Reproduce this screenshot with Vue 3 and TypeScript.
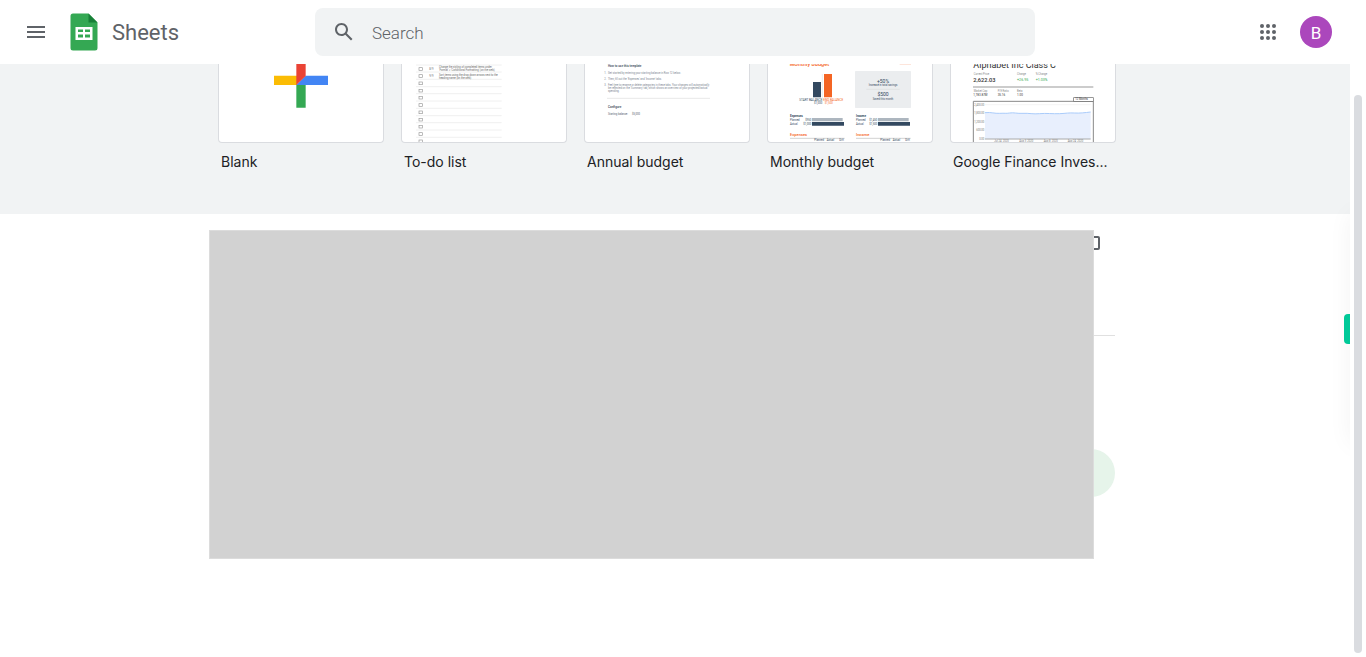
<script setup lang="ts">
import { ref } from 'vue'

const query = ref('')
const dots = [0, 6, 12]
const todoRows = [8, 29, 51, 73, 94, 116, 138, 160, 181, 203, 225]
const prices = [
  { y: 126, label: '2,400.00' },
  { y: 151, label: '1,800.00' },
  { y: 176, label: '1,200.00' },
  { y: 202, label: '600.00' },
  { y: 228, label: '0.00' },
]
const dates = [
  { x: 130, label: 'Jul 24, 2020' },
  { x: 205, label: 'Aug 3, 2020' },
  { x: 278, label: 'Aug 8, 2020' },
  { x: 350, label: 'Aug 24, 2020' },
]
const budgets = [
  { x: 66, title: 'Expenses', planned: '$950', actual: '$1,000' },
  { x: 264, title: 'Income', planned: '$1,450', actual: '$1,500' },
]
</script>

<template>
  <div class="page">
    <header class="topbar">
      <div class="brand">
        <button class="icon-button" type="button" aria-label="Main menu">
          <svg width="24" height="24" viewBox="0 0 24 24"><path fill="#5f6368" d="M3 18h18v-2H3zM3 13h18v-2H3zM3 6v2h18V6z" /></svg>
        </button>
        <a class="home" href="#">
          <svg width="28" height="38" viewBox="0 0 28 38">
            <path fill="#34a853" d="M3 .5h15.500l9 9V35a2.500 2.500 0 0 1-2.500 2.500H3A2.500 2.500 0 0 1 .5 35V3A2.500 2.500 0 0 1 3 .5z" />
            <path fill="#188038" d="M18.500.5l9 9h-9z" />
            <path fill="#fff" fill-rule="evenodd" d="M5.500 14h17v13h-17zM8 16.500v2.500h5v-2.500zM15 16.500v2.500h5v-2.500zM8 21.500v3h5v-3zM15 21.500v3h5v-3z" />
          </svg>
          <span>Sheets</span>
        </a>
      </div>
      <form class="search" role="search" @submit.prevent>
        <button class="icon-button" type="submit" aria-label="Search">
          <svg width="24" height="24" viewBox="0 0 24 24"><path fill="#5f6368" d="M20.490 19l-5.730-5.730C15.530 12.200 16 10.910 16 9.500 16 5.910 13.090 3 9.500 3S3 5.910 3 9.500 5.910 16 9.500 16c1.410 0 2.700-.470 3.770-1.240L19 20.490 20.490 19zM5 9.500C5 7.010 7.010 5 9.500 5S14 7.010 14 9.500 11.990 14 9.500 14 5 11.990 5 9.500z" /></svg>
        </button>
        <input v-model="query" type="text" placeholder="Search" aria-label="Search" />
      </form>
      <div class="account">
        <button class="icon-button" type="button" aria-label="Google apps">
          <svg width="16" height="16" viewBox="0 0 16 16" fill="#5f6368">
            <template v-for="y in dots" :key="y">
              <circle v-for="x in dots" :key="x" :cx="x + 2" :cy="y + 2" r="2" />
            </template>
          </svg>
        </button>
        <button class="avatar" type="button" aria-label="Account B">B</button>
      </div>
    </header>

    <div class="viewport">
      <main class="content">
        <section class="gallery">
          <div class="cards">
            <a class="card" href="#">
              <svg class="thumb" viewBox="0 0 492 234">
                <path fill="#fbbc04" d="M165 35h69v28h-69z" />
                <path fill="#34a853" d="M232 62h28v69h-28z" />
                <path fill="#4285f4" d="M260 35h67v28h-95z" />
                <path fill="#ea4335" d="M232-20h28v56l-28 27z" />
              </svg>
              <span class="label">Blank</span>
            </a>

            <a class="card" href="#">
              <svg class="thumb" viewBox="0 0 492 234" fill="#666">
                <g v-for="y in todoRows" :key="y">
                  <rect x="51" :y="y + 3" width="10" height="8" fill="none" stroke="#999" stroke-width="2" />
                  <path d="M42 0h257" stroke="#e8e8e8" stroke-width="2" :transform="`translate(0 ${y - 5})`" />
                </g>
                <g class="tiny">
                  <text x="82" y="18">8/9</text>
                  <text x="82" y="40">9/9</text>
                  <text x="111" y="13">Change the styling of completed items under</text>
                  <text x="111" y="22">'Format' &gt; 'Conditional Formatting' (on the web)</text>
                  <text x="111" y="35">Sort items using the drop down arrows next to the</text>
                  <text x="111" y="44">heading name (on the web)</text>
                </g>
              </svg>
              <span class="label">To-do list</span>
            </a>

            <a class="card" href="#">
              <svg class="thumb" viewBox="0 0 492 234" fill="#7d8692">
                <text class="small strong" x="69" y="10" fill="#56616e">How to use this template</text>
                <g class="tiny">
                  <text x="58" y="29">1.</text>
                  <text x="69" y="29">Get started by entering your starting balance in Row 12 below.</text>
                  <text x="58" y="47">2.</text>
                  <text x="69" y="47">Then, fill out the 'Expenses' and 'Income' tabs.</text>
                  <text x="58" y="66">3.</text>
                  <text x="69" y="66">Feel free to rename or delete categories in these tabs. Your changes will automatically</text>
                  <text x="69" y="76">be reflected on the 'Summary' tab, which shows an overview of your projected/actual</text>
                  <text x="69" y="85">spending.</text>
                </g>
                <path d="M66 103h309" stroke="#ddd" stroke-width="2" />
                <text class="small strong" x="69" y="133" fill="#56616e">Configure</text>
                <text class="tiny" x="69" y="153" fill="#56616e">Starting balance:</text>
                <text class="tiny" x="141" y="153" fill="#56616e">$5,000</text>
              </svg>
              <span class="label">Annual budget</span>
            </a>

            <a class="card" href="#">
              <svg class="thumb" viewBox="0 0 492 234" fill="#334960">
                <text class="title" x="65" y="6" fill="#f46524">Monthly budget</text>
                <path d="M395 1h34" stroke="#fbd0bd" stroke-width="2" />
                <path d="M135 54h24v46h-24z" />
                <path fill="#f46524" d="M168 30h24v70h-24z" />
                <path d="M163 30v90" stroke="#ccc" />
                <text class="small" x="94" y="110">START BALANCE</text>
                <text class="small" x="166" y="110" fill="#f46524">END BALANCE</text>
                <text class="tiny" x="138" y="120">$1,000</text>
                <text class="tiny" x="170" y="120" fill="#f46524">$1,500</text>
                <rect x="261" y="21" width="168" height="111" rx="2" fill="#ebedef" />
                <path d="M295 76h100" stroke="#ccc" />
                <g text-anchor="middle">
                  <text class="value" x="345" y="56">+50%</text>
                  <text class="tiny" x="345" y="67">Increase in total savings</text>
                  <text class="value" x="345" y="97">$500</text>
                  <text class="tiny" x="345" y="107">Saved this month</text>
                </g>
                <g v-for="b in budgets" :key="b.title" :transform="`translate(${b.x} 0)`">
                  <text class="small strong" x="0" y="158">{{ b.title }}</text>
                  <text class="tiny" x="0" y="170">Planned</text>
                  <text class="tiny" x="64" y="170" text-anchor="end">{{ b.planned }}</text>
                  <text class="tiny" x="0" y="183">Actual</text>
                  <text class="tiny" x="64" y="183" text-anchor="end">{{ b.actual }}</text>
                  <path fill="#adb6bf" d="M66 162h92v10H66z" />
                  <path d="M66 174h96v11H66z" />
                  <text class="heading" x="0" y="215" fill="#f46524">{{ b.title }}</text>
                  <path d="M0 223h164" stroke="#bbb" stroke-width="2" />
                  <text class="tiny" x="73" y="232">Planned</text>
                  <text class="tiny" x="110" y="232">Actual</text>
                  <text class="tiny" x="148" y="232">Diff.</text>
                </g>
              </svg>
              <span class="label">Monthly budget</span>
            </a>

            <a class="card" href="#">
              <svg class="thumb" viewBox="0 0 492 234" fill="#333">
                <text class="name" x="67" y="11">Alphabet Inc Class C</text>
                <g class="tiny" fill="#888">
                  <text x="68" y="34">Current Price</text>
                  <text x="198" y="34">Change</text>
                  <text x="254" y="34">% Change</text>
                  <text x="68" y="84">Market Cap</text>
                  <text x="140" y="84">P/E Ratio</text>
                  <text x="198" y="84">Beta</text>
                </g>
                <text class="price" x="67" y="54">2,622.03</text>
                <g class="amount" fill="#34a853">
                  <text x="198" y="52">+26.95</text>
                  <text x="254" y="52">+1.03%</text>
                </g>
                <path d="M66 69h361" stroke="#bbb" stroke-width="4" />
                <g class="small">
                  <text x="67" y="96">1,783.87M</text>
                  <text x="140" y="96">35.16</text>
                  <text x="198" y="96">1.00</text>
                </g>
                <path d="M102 146c20-2 28 3 44 2s18 1 30-1 22 2 40 1 30 3 50 1 40 1 60 0 28-3 44-2 32-1 49-3v81H102z" fill="#e8effd" />
                <path d="M102 146c20-2 28 3 44 2s18 1 30-1 22 2 40 1 30 3 50 1 40 1 60 0 28-3 44-2 32-1 49-3" fill="none" stroke="#a9cbfa" stroke-width="3" />
                <path d="M102 122h317" stroke="#eee" stroke-width="2" />
                <path d="M102 225h317" stroke="#aaa" stroke-width="3" />
                <path d="M67 240V112h360v128" fill="none" stroke="#888" stroke-width="3" />
                <rect x="368" y="101" width="59" height="11" fill="#fff" stroke="#666" stroke-width="2" />
                <text class="tiny" x="373" y="109">12 Months</text>
                <g class="tiny" fill="#777">
                  <text v-for="p in prices" :key="p.y" x="100" :y="p.y" text-anchor="end">{{ p.label }}</text>
                  <text v-for="d in dates" :key="d.x" :x="d.x" y="234">{{ d.label }}</text>
                </g>
              </svg>
              <span class="label">Google Finance Inves...</span>
            </a>
          </div>
        </section>

        <section class="files">
          <div class="listing">
            <div class="toolbar">
              <button class="icon-button" type="button" aria-label="Open file picker">
                <svg width="20" height="14" viewBox="0 0 20 14"><rect x="1" y="1" width="18" height="12" rx="1" fill="none" stroke="#5f6368" stroke-width="2" /></svg>
              </button>
            </div>
            <hr />
            <button class="create" type="button" aria-label="Create"></button>
            <div class="cover"></div>
          </div>
        </section>

        <div class="side-panel"></div>
        <div class="side-tab"></div>
      </main>
      <div class="scroll-track"><div class="scroll-thumb"></div></div>
    </div>
  </div>
</template>

<style>
body {
  margin: 0;
  background: #fff;
}
</style>

<style scoped>
.page {
  display: flex;
  flex-direction: column;
  min-height: 100vh;
  font-family: Inter, Roboto, sans-serif;
  color: #202124;
}

button {
  padding: 0;
  border: 0;
  background: none;
  cursor: pointer;
}

a {
  color: inherit;
  text-decoration: none;
}

.topbar {
  display: grid;
  grid-template-columns: 315px minmax(0, 720px) minmax(120px, 1fr);
  align-items: center;
  height: 64px;
}

.brand {
  display: flex;
  align-items: center;
  padding-left: 12px;
}

.icon-button {
  display: flex;
  align-items: center;
  justify-content: center;
  flex: none;
  width: 48px;
  height: 48px;
}

.home {
  display: flex;
  align-items: center;
  gap: 14px;
  margin-left: 10px;
  font: 22px/28px Roboto, sans-serif;
  color: #5f6368;
}

.home span {
  padding-top: 2px;
}

.search {
  display: flex;
  align-items: center;
  height: 48px;
  padding-left: 5px;
  border-radius: 8px;
  background: #f1f3f4;
}

.search input {
  flex: 1;
  min-width: 0;
  height: 24px;
  margin-left: 3px;
  padding: 1px 1px 0;
  border: 0;
  outline: 0;
  background: none;
  font: 300 17px/24px Roboto, sans-serif;
  color: #202124;
}

.search input::placeholder {
  color: #5f6368;
  opacity: 1;
}

.account {
  display: flex;
  align-items: center;
  justify-content: flex-end;
  gap: 8px;
  padding-right: 34px;
}

.avatar {
  width: 32px;
  height: 32px;
  padding-top: 2px;
  border-radius: 50%;
  background: #ab47bc;
  color: #fff;
  font: 17px/30px Roboto, sans-serif;
}

.viewport {
  display: flex;
  flex: 1;
}

.content {
  position: relative;
  flex: 1;
  min-width: 0;
  overflow: hidden;
}

.gallery {
  padding: 0 16px 40px 0;
  background: #f1f3f4;
}

.cards {
  display: grid;
  grid-template-columns: repeat(5, minmax(0, 1fr));
  gap: 17px;
  max-width: 898px;
  margin: 0 auto;
}

.thumb {
  display: block;
  box-sizing: border-box;
  width: 100%;
  border: 1px solid #dadce0;
  border-top: 0;
  border-radius: 0 0 4px 4px;
  background: #fff;
  font-family: Roboto, sans-serif;
}

.label {
  display: block;
  padding: 9px 3px 2px;
  font-size: 14px;
  line-height: 20px;
  white-space: nowrap;
}

.tiny {
  font-size: 8px;
}

.small {
  font-size: 9px;
}

.amount {
  font-size: 11px;
}

.heading {
  font-size: 12px;
  font-weight: 500;
}

.value {
  font-size: 15px;
}

.price {
  font-size: 17px;
  font-weight: 500;
}

.title {
  font-size: 17px;
  font-weight: 500;
}

.name {
  font-size: 27px;
}

.strong {
  font-weight: 700;
}

.files {
  padding-right: 16px;
}

.listing {
  position: relative;
  max-width: 898px;
  margin: 0 auto;
  padding: 5px 1px 0 0;
  box-sizing: border-box;
}

.toolbar {
  display: flex;
  justify-content: flex-end;
  padding-right: 1px;
}

hr {
  height: 1px;
  margin: 68px 0 0;
  border: 0;
  background: #e0e0e0;
}

.create {
  display: block;
  width: 48px;
  height: 48px;
  margin: 113px 0 0 auto;
  border-radius: 50%;
  background: #e6f4ea;
}

.cover {
  position: absolute;
  top: 16px;
  left: -9px;
  right: 22px;
  height: 327px;
  border: 1px solid #dcdcdc;
  background: #d2d2d2;
}

.side-panel {
  position: absolute;
  top: 150px;
  right: -40px;
  width: 40px;
  height: 230px;
  box-shadow: 0 0 24px rgba(0, 0, 0, 0.05);
}

.side-tab {
  position: absolute;
  top: 250px;
  right: 0;
  width: 6px;
  height: 30px;
  border-radius: 4px 0 0 4px;
  background: #00c998;
}

.scroll-track {
  display: flex;
  flex: none;
  box-sizing: border-box;
  width: 16px;
  padding: 31px 4px 4px;
}

.scroll-thumb {
  flex: 1;
  border-radius: 4px;
  background: #dadce0;
}
</style>
